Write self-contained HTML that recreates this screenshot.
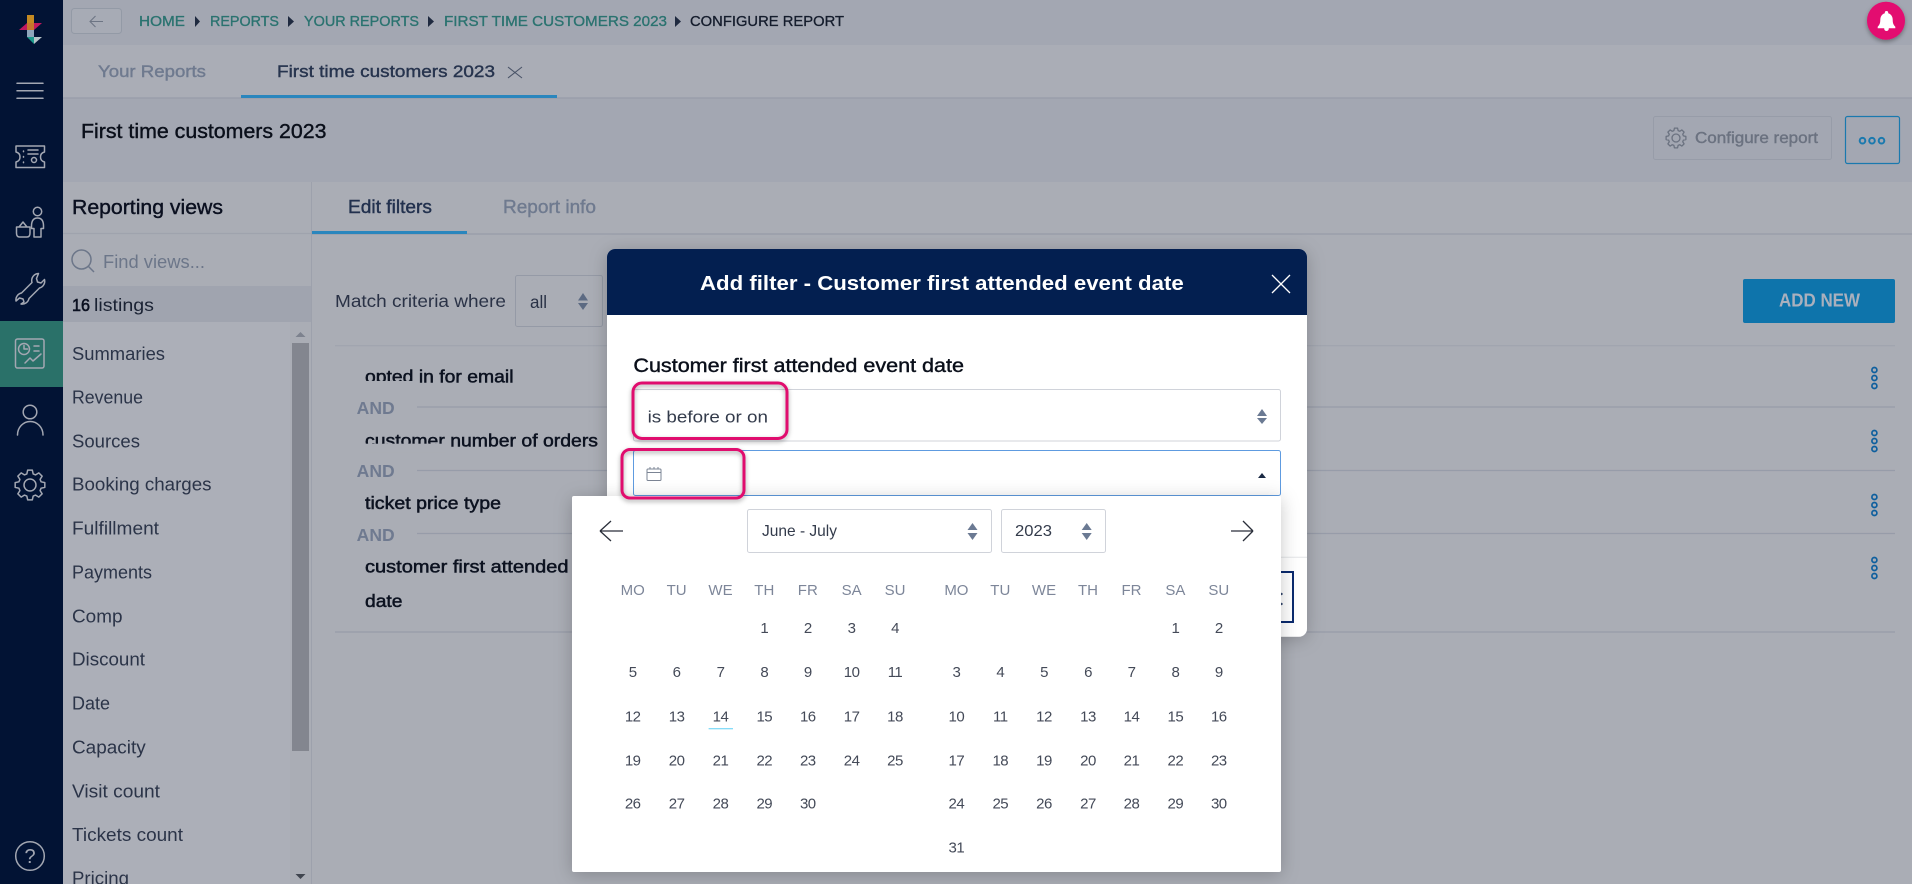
<!DOCTYPE html>
<html lang="en"><head><meta charset="utf-8"><title>Configure report</title>
<style>
html,body{margin:0;padding:0;background:#aaadb5;overflow:hidden}
svg{display:block}
text{font-family:"Liberation Sans",sans-serif}
.m{stroke-width:.4}
.li{font-size:18px;fill:#2b3448}
.d{font-size:15px;fill:#444a58;text-anchor:middle;letter-spacing:-.5px}
.h{font-size:15px;fill:#7d8699;text-anchor:middle}
.nv{fill:none;stroke:#a3a7b2;stroke-width:1.5;stroke-linejoin:round;stroke-linecap:round}
.row{font-size:17.5px;fill:#0c1220;stroke:#0c1220;stroke-width:.5}
.and{font-size:17.5px;font-weight:bold;fill:#6f7a90}
.bc{font-size:15px;fill:#2b7370;stroke:#2b7370;stroke-width:.35}
.ln{stroke:#979ca9;stroke-width:1.2}
.dots circle{fill:none;stroke:#0e5f9e;stroke-width:1.7}
</style></head>
<body>
<svg xmlns="http://www.w3.org/2000/svg" width="1912" height="884" viewBox="0 0 1912 884">
<defs>
<filter id="s1" x="-10%" y="-10%" width="120%" height="125%"><feDropShadow dx="0" dy="3" stdDeviation="9" flood-color="#000" flood-opacity=".22"/></filter>
<filter id="s2" x="-20%" y="-30%" width="140%" height="160%"><feDropShadow dx="0" dy="2" stdDeviation="2.5" flood-color="#000" flood-opacity=".35"/></filter>
</defs>

<!-- page bands -->
<rect width="1912" height="884" fill="#aaadb5"/>
<rect x="63" y="0" width="1849" height="45" fill="#a3a7b2"/>
<rect x="63" y="45" width="1849" height="53" fill="#aaadb6"/>
<rect x="63" y="98" width="1849" height="84" fill="#a3a7b2"/>
<line x1="63" y1="98" x2="1912" y2="98" class="ln"/>

<!-- left nav -->
<rect x="0" y="0" width="63" height="884" fill="#021334"/>
<rect x="0" y="321" width="63" height="66" fill="#2a7169"/>
<polygon points="27,15 34,15 34,23 27,23" fill="#c48a22"/>
<polygon points="19,30 27,23 42,23 34,30" fill="#c2185f"/>
<polygon points="27,23 34,23 34,30 27,30" fill="#c9762c"/>
<polygon points="27,30 34,30 34,37 27,37" fill="#8fa6bb"/>
<polygon points="27,37 34,37 34,44" fill="#1c9a8c"/>
<polygon points="34,37 42,37 34,44" fill="#b6c4c8"/>
<g class="nv">
<path d="M17 83.3H43M17 90.7H43M17 98.3H43"/>
<path d="M16 146H44.5V152Q40.5 153 40.5 157Q40.5 161 44.5 162V167.5H16V162Q20 161 20 157Q20 153 16 152Z"/>
<path d="M23.5 151v.6M23.5 156.5v.6M23.5 162v.6M28 150H38M28 154H38"/><circle cx="34" cy="160" r="2.5"/>
<circle cx="37.5" cy="211.5" r="4.2"/>
<path d="M37.5 218c-4 0-6 3-6 8v2.5H34V237h7V228.5h2.5V226c0-5-2-8-6-8z"/>
<path d="M19 227L23 222L27 227M16.5 227H30V233Q30 237 27 237H19.5Q16.5 237 16.5 233Z"/>
<path d="M38.5 273.5A7 7 0 0 0 32 282.5L21.5 293A7 7 0 0 0 16 301L19.5 298L23 299L24 302L21 304A7 7 0 0 0 29 298.5L39.5 288A7 7 0 0 0 44.5 279.5L41 283L37.5 282L36.5 278.5Z"/>
<rect x="15.5" y="339" width="28.5" height="29" rx="2"/>
<circle cx="24" cy="349" r="5.5"/><path d="M24 345.5V349H27.5M34 346H39M34 351H39M25 363L30 358L33 361L41 354"/>
<circle cx="30" cy="412" r="6.8"/><path d="M17.5 435A12.7 13.5 0 0 1 43 435"/>
<polygon transform="translate(30 485) scale(15)" stroke-width=".1" points=".988,-.156 .988,.156 .74,.212 .673,.373 .809,.588 .588,.809 .373,.673 .212,.74 .156,.988 -.156,.988 -.212,.74 -.373,.673 -.588,.809 -.809,.588 -.673,.373 -.74,.212 -.988,.156 -.988,-.156 -.74,-.212 -.673,-.373 -.809,-.588 -.588,-.809 -.373,-.673 -.212,-.74 -.156,-.988 .156,-.988 .212,-.74 .373,-.673 .588,-.809 .809,-.588 .673,-.373 .74,-.212"/>
<circle cx="30" cy="485" r="6"/>
<circle cx="30" cy="856" r="14.3"/>
</g>
<text x="30" y="863" font-size="20" fill="#a3a7b2" text-anchor="middle">?</text>

<!-- top breadcrumb -->
<rect x="71.5" y="8.5" width="50" height="25" rx="3" fill="#a7abb5" stroke="#939aa6"/>
<path d="M103 21.5H90M95.5 16L90 21.5L95.5 27" fill="none" stroke="#6d7584" stroke-width="1.1"/>
<text class="bc" x="139" y="26" textLength="46" lengthAdjust="spacingAndGlyphs">HOME</text>
<polygon points="195,16 200,21.5 195,27" fill="#1f2a40"/>
<text class="bc" x="210" y="26" textLength="69" lengthAdjust="spacingAndGlyphs">REPORTS</text>
<polygon points="288,16 294,21.5 288,27" fill="#1f2a40"/>
<text class="bc" x="304" y="26" textLength="115" lengthAdjust="spacingAndGlyphs">YOUR REPORTS</text>
<polygon points="428,16 434,21.5 428,27" fill="#1f2a40"/>
<text class="bc" x="444" y="26" textLength="223" lengthAdjust="spacingAndGlyphs">FIRST TIME CUSTOMERS 2023</text>
<polygon points="675,16 681,21.5 675,27" fill="#1f2a40"/>
<text x="690" y="26" font-size="15" fill="#141c2c" stroke="#141c2c" stroke-width=".3" textLength="154" lengthAdjust="spacingAndGlyphs">CONFIGURE REPORT</text>
<circle cx="1886" cy="20.7" r="19" fill="#e3096f" filter="url(#s2)"/>
<path d="M1886.5 11a1.7 1.7 0 0 1 1.7 1.7v.6c3 .9 4.5 3.5 4.5 6.5c0 4 1.2 5.5 2.6 7v1.4h-17.6v-1.4c1.4-1.5 2.6-3 2.6-7c0-3 1.5-5.6 4.5-6.5v-.6a1.7 1.7 0 0 1 1.7-1.7z" fill="#fff"/>
<circle cx="1886.5" cy="28.7" r="2.3" fill="#fff"/>

<!-- tabs -->
<text x="98" y="77" font-size="17" class="m" fill="#6f7a8f" stroke="#6f7a8f" textLength="108" lengthAdjust="spacingAndGlyphs">Your Reports</text>
<text x="277" y="77" font-size="17" class="m" fill="#27344e" stroke="#27344e" textLength="218" lengthAdjust="spacingAndGlyphs">First time customers 2023</text>
<path d="M508 67L522 78M522 67L508 78" stroke="#4a5468" stroke-width="1.1"/>
<rect x="241" y="95" width="316" height="3" fill="#2a86bd"/>

<!-- header -->
<text x="81" y="138" font-size="20.5" class="m" fill="#0a0f1a" stroke="#0a0f1a" textLength="245.5" lengthAdjust="spacingAndGlyphs">First time customers 2023</text>
<rect x="1653.5" y="116.5" width="178" height="43" rx="2" fill="none" stroke="#979ca8"/>
<polygon transform="translate(1676 138) scale(10)" fill="none" stroke="#6b7280" stroke-width=".13" stroke-linejoin="round" points=".988,-.156 .988,.156 .74,.212 .673,.373 .809,.588 .588,.809 .373,.673 .212,.74 .156,.988 -.156,.988 -.212,.74 -.373,.673 -.588,.809 -.809,.588 -.673,.373 -.74,.212 -.988,.156 -.988,-.156 -.74,-.212 -.673,-.373 -.809,-.588 -.588,-.809 -.373,-.673 -.212,-.74 -.156,-.988 .156,-.988 .212,-.74 .373,-.673 .588,-.809 .809,-.588 .673,-.373 .74,-.212"/>
<circle cx="1676" cy="138" r="4" fill="none" stroke="#6b7280" stroke-width="1.3"/>
<text x="1695" y="143" font-size="15.5" class="m" fill="#6b7280" stroke="#6b7280" textLength="123" lengthAdjust="spacingAndGlyphs">Configure report</text>
<rect x="1845.5" y="116.5" width="54" height="47" rx="2" fill="none" stroke="#1a79ae" stroke-width="1.2"/>
<g fill="none" stroke="#1a79ae" stroke-width="2"><circle cx="1862.5" cy="140.7" r="2.8"/><circle cx="1872" cy="140.7" r="2.8"/><circle cx="1881.5" cy="140.7" r="2.8"/></g>

<!-- reporting views column -->
<line x1="311.5" y1="182" x2="311.5" y2="884" stroke="#9da1ac"/>
<text x="72" y="214" font-size="20" class="m" fill="#0b1020" stroke="#0b1020" textLength="151" lengthAdjust="spacingAndGlyphs">Reporting views</text>
<line x1="63" y1="233.5" x2="311" y2="233.5" class="ln" stroke-opacity=".6"/>
<circle cx="81.5" cy="259.5" r="9.5" fill="none" stroke="#6c7689" stroke-width="1.5"/>
<path d="M88.5 266.5L94 272" stroke="#6c7689" stroke-width="1.5"/>
<text x="103" y="268" font-size="18" fill="#6c7689" textLength="102" lengthAdjust="spacingAndGlyphs">Find views...</text>
<rect x="63" y="286" width="248" height="36" fill="#a0a4af"/>
<text x="72" y="311" font-size="17.5" fill="#0b1020" stroke="#0b1020" stroke-width=".6" textLength="18" lengthAdjust="spacingAndGlyphs">16</text>
<text x="94" y="311" font-size="17.5" fill="#1a2233" textLength="60" lengthAdjust="spacingAndGlyphs">listings</text>
<rect x="63" y="322" width="227" height="562" fill="#acafb8"/>
<rect x="292" y="343" width="17" height="408" fill="#83868f"/>
<polygon points="295.5,337 300.5,332 305.5,337" fill="#7d828e"/>
<polygon points="295.5,874 305.5,874 300.5,879" fill="#40454f"/>
<text class="li" x="72" y="360" textLength="93" lengthAdjust="spacingAndGlyphs">Summaries</text>
<text class="li" x="72" y="403.5" textLength="71" lengthAdjust="spacingAndGlyphs">Revenue</text>
<text class="li" x="72" y="447.5" textLength="68" lengthAdjust="spacingAndGlyphs">Sources</text>
<text class="li" x="72" y="490.7" textLength="139.5" lengthAdjust="spacingAndGlyphs">Booking charges</text>
<text class="li" x="72" y="534.6" textLength="87" lengthAdjust="spacingAndGlyphs">Fulfillment</text>
<text class="li" x="72" y="578.6" textLength="80" lengthAdjust="spacingAndGlyphs">Payments</text>
<text class="li" x="72" y="622.5" textLength="50.5" lengthAdjust="spacingAndGlyphs">Comp</text>
<text class="li" x="72" y="665.7" textLength="73" lengthAdjust="spacingAndGlyphs">Discount</text>
<text class="li" x="72" y="709.7" textLength="38" lengthAdjust="spacingAndGlyphs">Date</text>
<text class="li" x="72" y="753.6" textLength="73.7" lengthAdjust="spacingAndGlyphs">Capacity</text>
<text class="li" x="72" y="797.6" textLength="88" lengthAdjust="spacingAndGlyphs">Visit count</text>
<text class="li" x="72" y="840.8" textLength="111" lengthAdjust="spacingAndGlyphs">Tickets count</text>
<text class="li" x="72" y="884.5" textLength="57" lengthAdjust="spacingAndGlyphs">Pricing</text>

<!-- main tabs -->
<text x="348" y="213" font-size="18.5" class="m" fill="#22314e" stroke="#22314e" textLength="84" lengthAdjust="spacingAndGlyphs">Edit filters</text>
<text x="503" y="213" font-size="18.5" class="m" fill="#6f7a8f" stroke="#6f7a8f" textLength="93" lengthAdjust="spacingAndGlyphs">Report info</text>
<line x1="312" y1="234" x2="1912" y2="234" class="ln"/>
<rect x="312" y="231" width="155" height="3" fill="#2a86bd"/>

<!-- match criteria -->
<text x="335" y="307" font-size="17.5" fill="#2a3246" textLength="171" lengthAdjust="spacingAndGlyphs">Match criteria where</text>
<rect x="515.5" y="275.5" width="87" height="51" rx="2" fill="none" stroke="#959aa6"/>
<text x="530" y="308" font-size="17.5" fill="#2a3246" textLength="17" lengthAdjust="spacingAndGlyphs">all</text>
<polygon points="578,300.5 583,293 588,300.5" fill="#5c6a82"/><polygon points="578,303 588,303 583,310" fill="#5c6a82"/>
<rect x="1743" y="279" width="152" height="44" rx="2" fill="#0e74ab"/>
<text x="1779" y="306.7" font-size="18" font-weight="bold" fill="#aab0bd" textLength="81" lengthAdjust="spacingAndGlyphs">ADD NEW</text>

<!-- filter rows -->
<line x1="335" y1="345.7" x2="1895" y2="345.7" class="ln" stroke-opacity=".55"/>
<line x1="417" y1="407" x2="1895" y2="407" class="ln"/>
<line x1="417" y1="470.5" x2="1895" y2="470.5" class="ln"/>
<line x1="417" y1="533.5" x2="1895" y2="533.5" class="ln"/>
<line x1="335" y1="632" x2="1895" y2="632" class="ln"/>
<text class="row" x="365" y="382.7" textLength="148.5" lengthAdjust="spacingAndGlyphs">opted in for email</text>
<rect x="362" y="381" width="53.5" height="9" fill="#aaadb5"/>
<text class="row" x="365" y="446.3" textLength="233" lengthAdjust="spacingAndGlyphs">customer number of orders</text>
<rect x="362" y="443.7" width="84" height="9" fill="#aaadb5"/>
<text class="row" x="365" y="509" textLength="136" lengthAdjust="spacingAndGlyphs">ticket price type</text>
<text class="row" x="365" y="572.6" textLength="258" lengthAdjust="spacingAndGlyphs">customer first attended event</text>
<text class="row" x="365" y="607" textLength="37.5" lengthAdjust="spacingAndGlyphs">date</text>
<text class="and" x="356.7" y="414" textLength="38" lengthAdjust="spacingAndGlyphs">AND</text>
<text class="and" x="356.7" y="477" textLength="38" lengthAdjust="spacingAndGlyphs">AND</text>
<text class="and" x="356.7" y="541" textLength="38" lengthAdjust="spacingAndGlyphs">AND</text>
<g class="dots">
<circle cx="1874.4" cy="370" r="2.5"/><circle cx="1874.4" cy="378" r="2.5"/><circle cx="1874.4" cy="386" r="2.5"/>
<circle cx="1874.4" cy="433" r="2.5"/><circle cx="1874.4" cy="441" r="2.5"/><circle cx="1874.4" cy="449" r="2.5"/>
<circle cx="1874.4" cy="497" r="2.5"/><circle cx="1874.4" cy="505" r="2.5"/><circle cx="1874.4" cy="513" r="2.5"/>
<circle cx="1874.4" cy="560" r="2.5"/><circle cx="1874.4" cy="568" r="2.5"/><circle cx="1874.4" cy="576" r="2.5"/>
</g>

<!-- modal -->
<rect x="607" y="249" width="700" height="387.7" rx="8" fill="#fff" filter="url(#s1)"/>
<path d="M607 315V257a8 8 0 0 1 8-8H1299a8 8 0 0 1 8 8V315Z" fill="#031f50"/>
<text x="700" y="290" font-size="20.5" font-weight="bold" fill="#fff" textLength="483.7" lengthAdjust="spacingAndGlyphs">Add filter - Customer first attended event date</text>
<path d="M1272 275L1290 293M1290 275L1272 293" stroke="#fff" stroke-width="1.3"/>
<text x="633.4" y="372" font-size="19" class="m" fill="#0a0f1a" stroke="#0a0f1a" textLength="330.6" lengthAdjust="spacingAndGlyphs">Customer first attended event date</text>
<rect x="633.5" y="389.5" width="647" height="51.5" rx="2" fill="#fff" stroke="#d0d3da"/>
<text x="647.6" y="422.7" font-size="17" fill="#333b4b" textLength="120.4" lengthAdjust="spacingAndGlyphs">is before or on</text>
<polygon points="1257,416 1262,409 1267,416" fill="#6b7a93"/><polygon points="1257,418 1267,418 1262,424" fill="#6b7a93"/>
<rect x="633.5" y="450.5" width="647" height="45" rx="2" fill="#fff" stroke="#5e9be0"/>
<rect x="647" y="469" width="14" height="11.5" rx="1" fill="none" stroke="#7b8494" stroke-width="1"/>
<path d="M647 472.5H661M650 467V469M654 467V469M658 467V469" stroke="#7b8494" stroke-width="1" fill="none"/>
<polygon points="1258,478 1262,473 1266,478" fill="#1a2a44"/>
<line x1="1281" y1="557.3" x2="1307" y2="557.3" stroke="#e4e5e8"/>
<path d="M1281 572H1293V622H1281" fill="none" stroke="#0a2a6e" stroke-width="2"/>
<circle cx="1281.5" cy="594" r="1.2" fill="#33476e"/><circle cx="1281.5" cy="604" r="1.2" fill="#33476e"/>

<!-- calendar -->
<rect x="572" y="496" width="709" height="376" rx="2" fill="#fff" filter="url(#s1)"/>
<path d="M600 531H623M600 531L611 521M600 531L611 541" fill="none" stroke="#2a2f3a" stroke-width="1.3"/>
<path d="M1231 531H1253M1253 531L1243 521M1253 531L1243 541" fill="none" stroke="#2a2f3a" stroke-width="1.3"/>
<rect x="747.5" y="509.5" width="244" height="43" rx="2" fill="#fff" stroke="#d0d3da"/>
<text x="762" y="536" font-size="16" fill="#333b4b" textLength="75" lengthAdjust="spacingAndGlyphs">June - July</text>
<polygon points="967.5,530 972.5,523 977.5,530" fill="#6b7a93"/><polygon points="967.5,533 977.5,533 972.5,540" fill="#6b7a93"/>
<rect x="1001.5" y="509.5" width="104" height="43" rx="2" fill="#fff" stroke="#d0d3da"/>
<text x="1015" y="536" font-size="16" fill="#333b4b" textLength="37" lengthAdjust="spacingAndGlyphs">2023</text>
<polygon points="1081.7,530 1086.7,523 1091.7,530" fill="#6b7a93"/><polygon points="1081.7,533 1091.7,533 1086.7,540" fill="#6b7a93"/>

<g>
<text class="h" x="632.7" y="595">MO</text><text class="h" x="676.6" y="595">TU</text><text class="h" x="720.5" y="595">WE</text><text class="h" x="764.3" y="595">TH</text><text class="h" x="807.8" y="595">FR</text><text class="h" x="851.6" y="595">SA</text><text class="h" x="895" y="595">SU</text>
<text class="h" x="956.4" y="595">MO</text><text class="h" x="1000.3" y="595">TU</text><text class="h" x="1044" y="595">WE</text><text class="h" x="1088" y="595">TH</text><text class="h" x="1131.5" y="595">FR</text><text class="h" x="1175.4" y="595">SA</text><text class="h" x="1218.8" y="595">SU</text>
</g>
<g>
<text class="d" x="764.3" y="633">1</text><text class="d" x="807.8" y="633">2</text><text class="d" x="851.6" y="633">3</text><text class="d" x="895" y="633">4</text>
<text class="d" x="632.7" y="677">5</text><text class="d" x="676.6" y="677">6</text><text class="d" x="720.5" y="677">7</text><text class="d" x="764.3" y="677">8</text><text class="d" x="807.8" y="677">9</text><text class="d" x="851.6" y="677">10</text><text class="d" x="895" y="677">11</text>
<text class="d" x="632.7" y="721.7">12</text><text class="d" x="676.6" y="721.7">13</text><text class="d" x="720.5" y="721.7">14</text><text class="d" x="764.3" y="721.7">15</text><text class="d" x="807.8" y="721.7">16</text><text class="d" x="851.6" y="721.7">17</text><text class="d" x="895" y="721.7">18</text>
<text class="d" x="632.7" y="765.7">19</text><text class="d" x="676.6" y="765.7">20</text><text class="d" x="720.5" y="765.7">21</text><text class="d" x="764.3" y="765.7">22</text><text class="d" x="807.8" y="765.7">23</text><text class="d" x="851.6" y="765.7">24</text><text class="d" x="895" y="765.7">25</text>
<text class="d" x="632.7" y="808.3">26</text><text class="d" x="676.6" y="808.3">27</text><text class="d" x="720.5" y="808.3">28</text><text class="d" x="764.3" y="808.3">29</text><text class="d" x="807.8" y="808.3">30</text>
</g>
<line x1="708.6" y1="728.7" x2="733" y2="728.7" stroke="#5fd0f5" stroke-width="1"/>
<g>
<text class="d" x="1175.4" y="633">1</text><text class="d" x="1218.8" y="633">2</text>
<text class="d" x="956.4" y="677">3</text><text class="d" x="1000.3" y="677">4</text><text class="d" x="1044" y="677">5</text><text class="d" x="1088" y="677">6</text><text class="d" x="1131.5" y="677">7</text><text class="d" x="1175.4" y="677">8</text><text class="d" x="1218.8" y="677">9</text>
<text class="d" x="956.4" y="721.7">10</text><text class="d" x="1000.3" y="721.7">11</text><text class="d" x="1044" y="721.7">12</text><text class="d" x="1088" y="721.7">13</text><text class="d" x="1131.5" y="721.7">14</text><text class="d" x="1175.4" y="721.7">15</text><text class="d" x="1218.8" y="721.7">16</text>
<text class="d" x="956.4" y="765.7">17</text><text class="d" x="1000.3" y="765.7">18</text><text class="d" x="1044" y="765.7">19</text><text class="d" x="1088" y="765.7">20</text><text class="d" x="1131.5" y="765.7">21</text><text class="d" x="1175.4" y="765.7">22</text><text class="d" x="1218.8" y="765.7">23</text>
<text class="d" x="956.4" y="808.3">24</text><text class="d" x="1000.3" y="808.3">25</text><text class="d" x="1044" y="808.3">26</text><text class="d" x="1088" y="808.3">27</text><text class="d" x="1131.5" y="808.3">28</text><text class="d" x="1175.4" y="808.3">29</text><text class="d" x="1218.8" y="808.3">30</text>
<text class="d" x="956.4" y="852.7">31</text>
</g>

<!-- pink annotation boxes -->
<rect x="633" y="383" width="154" height="55.5" rx="9" fill="none" stroke="#e0106e" stroke-width="3" filter="url(#s2)"/>
<rect x="622" y="449.5" width="122" height="48.5" rx="8" fill="none" stroke="#e0106e" stroke-width="3" filter="url(#s2)"/>
</svg>
</body></html>
